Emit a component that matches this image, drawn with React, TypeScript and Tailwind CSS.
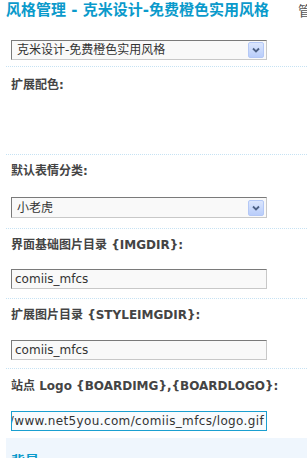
import React from "react";

const FONT = { fontFamily: '"DejaVu Sans", "Noto Sans CJK SC", sans-serif' };

function Chevron() {
  return (
    <div className="w-[16px] h-[16px] bg-gradient-to-b from-[#dbe6fd] to-[#b9cdfa] border border-[#b4c8f6] rounded-[2px] flex items-center justify-center">
      <svg width="8" height="6" viewBox="0 0 8 6">
        <path d="M1 1.5 L4 4.5 L7 1.5" stroke="#4d6185" strokeWidth="1.8" fill="none" />
      </svg>
    </div>
  );
}

function Select({ text, h }: { text: string; h: string }) {
  return (
    <div
      className={`w-[256px] ${h} bg-[#f9f9f9] border border-t-[#7a7a7a] border-l-[#7a7a7a] border-r-[#c8c8c8] border-b-[#c8c8c8] flex items-center justify-between pl-[5px] pr-[2px]`}
    >
      <span className="text-[12px] text-[#333] leading-none">{text}</span>
      <Chevron />
    </div>
  );
}

function TextInput({ text }: { text: string }) {
  return (
    <div className="w-[256px] h-[20px] bg-[#f9f9f9] border border-t-[#7a7a7a] border-l-[#7a7a7a] border-r-[#c8c8c8] border-b-[#c8c8c8] flex items-center pl-[3px]">
      <span className="text-[12px] text-[#333] leading-none">{text}</span>
    </div>
  );
}

function Label({ children }: { children: React.ReactNode }) {
  return <div className="h-[14px] leading-[14px] text-[12px] font-bold text-[#444] whitespace-nowrap">{children}</div>;
}

export default function App() {
  return (
    <div className="w-[307px] h-[458px] overflow-hidden bg-white" style={FONT}>
      <div className="h-[21px] flex items-center pl-[6px] whitespace-nowrap">
        <span className="text-[15px] font-bold text-[#0a9acb] leading-none">风格管理 - 克米设计-免费橙色实用风格</span>
        <span className="ml-[29px] text-[14px] text-[#555] leading-none">管理</span>
      </div>
      <div className="pl-[6px]">
        <div className="pt-[19px] pb-[6px] pl-[5px]">
          <Select text="克米设计-免费橙色实用风格" h="h-[20px]" />
        </div>
        <div className="border-t border-dotted border-[#c6e2f3] h-[88px] pt-[11px] pl-[5px]">
          <Label>扩展配色:</Label>
        </div>
        <div className="border-t border-dotted border-[#c6e2f3] pt-[9px] pb-[10px] pl-[5px]">
          <Label>默认表情分类:</Label>
          <div className="mt-[19px]">
            <Select text="小老虎" h="h-[21px]" />
          </div>
        </div>
        <div className="border-t border-dotted border-[#c6e2f3] pt-[9px] pb-[9px] pl-[5px]">
          <Label>界面基础图片目录 {"{IMGDIR}"}:</Label>
          <div className="mt-[17px]">
            <TextInput text="comiis_mfcs" />
          </div>
        </div>
        <div className="border-t border-dotted border-[#c6e2f3] pt-[9px] pb-[8px] pl-[5px]">
          <Label>扩展图片目录 {"{STYLEIMGDIR}"}:</Label>
          <div className="mt-[18px]">
            <TextInput text="comiis_mfcs" />
          </div>
        </div>
        <div className="border-t border-dotted border-[#c6e2f3] pt-[10px] pb-[7px] pl-[5px]">
          <Label>站点 Logo {"{BOARDIMG}"},{"{BOARDLOGO}"}:</Label>
          <div className="mt-[18px] w-[256px] h-[20px] bg-[#f8fbfe] border border-[#1a9fd0] flex items-center justify-end overflow-hidden pr-[2px]">
            <span className="text-[12px] text-[#333] leading-none whitespace-nowrap tracking-[0.36px]">http://www.net5you.com/comiis_mfcs/logo.gif</span>
          </div>
        </div>
        <div className="bg-[#eff6fd] h-[40px] pt-[11px] pl-[5px]">
          <span className="text-[14px] font-bold text-[#0a9acb] leading-none">背景</span>
        </div>
      </div>
    </div>
  );
}
